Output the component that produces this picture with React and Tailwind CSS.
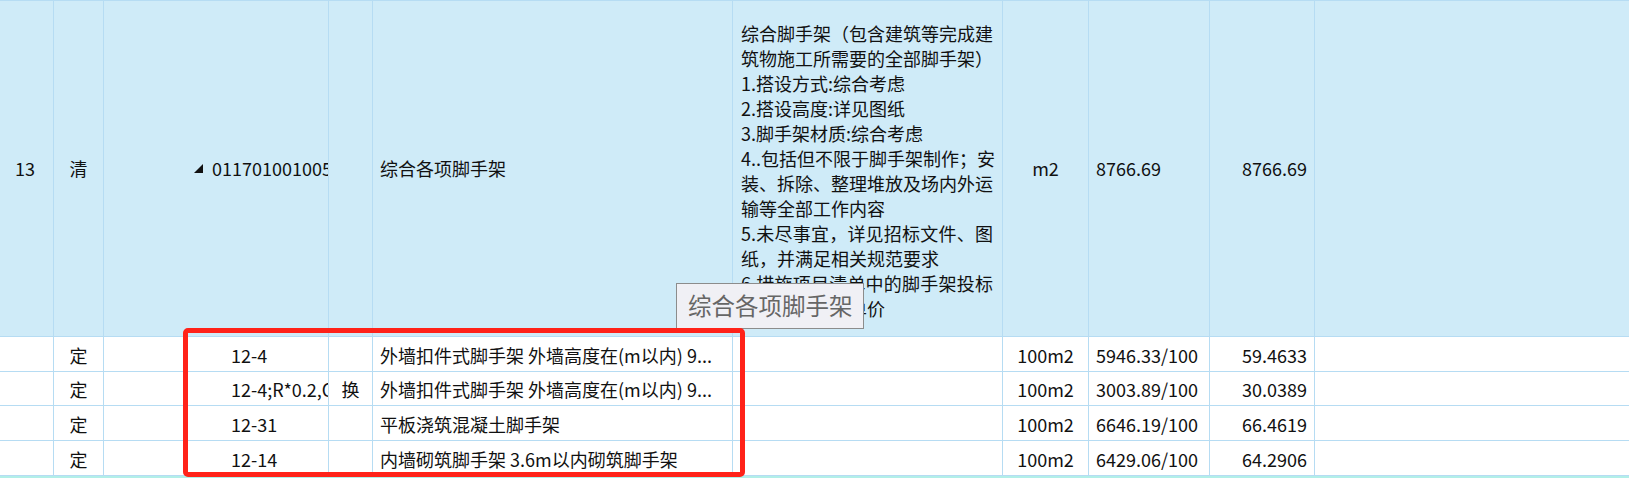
import React from 'react';

const GRID = 'grid grid-cols-[54px_50px_225px_44px_360px_270px_86px_121px_105px_1fr]';
const CELL = 'border-r border-[#b6dcf3] overflow-hidden whitespace-nowrap';

const descLines = [
  { text: '综合脚手架（包含建筑等完成建', wrap: true },
  { text: '筑物施工所需要的全部脚手架）', wrap: true },
  { text: '1.搭设方式:综合考虑' },
  { text: '2.搭设高度:详见图纸' },
  { text: '3.脚手架材质:综合考虑' },
  { text: '4..包括但不限于脚手架制作；安', wrap: true },
  { text: '装、拆除、整理堆放及场内外运', wrap: true },
  { text: '输等全部工作内容' },
  { text: '5.未尽事宜，详见招标文件、图', wrap: true },
  { text: '纸，并满足相关规范要求' },
  { text: '6.措施项目清单中的脚手架投标', wrap: true },
  { text: '报价应为综合单价' },
];

const subRows = [
  { code: '12-4', huan: '', name: '外墙扣件式脚手架 外墙高度在(m以内) 9...', expr: '5946.33/100', qty: '59.4633', h: 'h-[35px]' },
  { code: '12-4;R*0.2,C*0.2', huan: '换', name: '外墙扣件式脚手架 外墙高度在(m以内) 9...', expr: '3003.89/100', qty: '30.0389', h: 'h-[34px]' },
  { code: '12-31', huan: '', name: '平板浇筑混凝土脚手架', expr: '6646.19/100', qty: '66.4619', h: 'h-[35px]' },
  { code: '12-14', huan: '', name: '内墙砌筑脚手架 3.6m以内砌筑脚手架', expr: '6429.06/100', qty: '64.2906', h: 'h-[35px]' },
];

function MainRow() {
  return (
    <div className={`${GRID} h-[336px] bg-[#cfebf8] border-b border-[#b6dcf3]`}>
      <div className={`${CELL} flex items-center pl-[15px]`}>13</div>
      <div className={`${CELL} flex items-center justify-center`}>清</div>
      <div className={`${CELL} flex items-center pl-[90px]`}>
        <svg width="9" height="9" viewBox="0 0 9 9" className="shrink-0">
          <polygon points="9,0 9,9 0,9" fill="#111" />
        </svg>
        <span className="ml-[9px]">011701001005</span>
      </div>
      <div className={CELL}></div>
      <div className={`${CELL} flex items-center pl-[7px]`}>综合各项脚手架</div>
      <div className={`${CELL} pt-5 pl-2 leading-[25px]`}>
        {descLines.map((l, i) => (
          <div key={i} className={`w-[252px] text-justify ${l.wrap ? '[text-align-last:justify]' : ''}`}>
            {l.text}
          </div>
        ))}
      </div>
      <div className={`${CELL} flex items-center justify-center`}>m2</div>
      <div className={`${CELL} flex items-center pl-[7px]`}>8766.69</div>
      <div className={`${CELL} flex items-center justify-end pr-[7px]`}>8766.69</div>
      <div></div>
    </div>
  );
}

function SubRow({ row }) {
  return (
    <div className={`${GRID} ${row.h} bg-white border-b border-[#b6dcf3]`}>
      <div className={CELL}></div>
      <div className={`${CELL} flex items-center justify-center pt-[2px]`}>定</div>
      <div className={`${CELL} flex items-center pl-[127px] pt-[2px]`}>{row.code}</div>
      <div className={`${CELL} flex items-center justify-center pt-[2px]`}>{row.huan}</div>
      <div className={`${CELL} flex items-center pl-[7px] pt-[2px]`}>{row.name}</div>
      <div className={CELL}></div>
      <div className={`${CELL} flex items-center justify-center pt-[2px]`}>100m2</div>
      <div className={`${CELL} flex items-center pl-[7px] pt-[2px]`}>{row.expr}</div>
      <div className={`${CELL} flex items-center justify-end pr-[7px] pt-[2px]`}>{row.qty}</div>
      <div></div>
    </div>
  );
}

export default function App() {
  return (
    <div className="relative w-[1629px] h-[478px] overflow-hidden bg-white text-[18px] text-[#111] font-['Noto_Sans_CJK_SC','Noto_Sans',sans-serif]">
      <div className="border-t border-[#b6dcf3]">
        <MainRow />
        {subRows.map((row) => (
          <SubRow key={row.expr} row={row} />
        ))}
        <div className="h-[3px] bg-[#b2efe8]"></div>
      </div>

      <div className="absolute left-[676px] top-[283px] w-[188px] h-[46px] bg-[#f0f0f5] border border-[#8c8c8c] flex items-center pl-[11px] text-[23.5px] text-[#666] whitespace-nowrap">
        综合各项脚手架
      </div>

      <div className="absolute left-[183px] top-[328px] w-[562px] h-[149px] border-[5px] border-[#ff2219] rounded-[5px]"></div>
    </div>
  );
}
